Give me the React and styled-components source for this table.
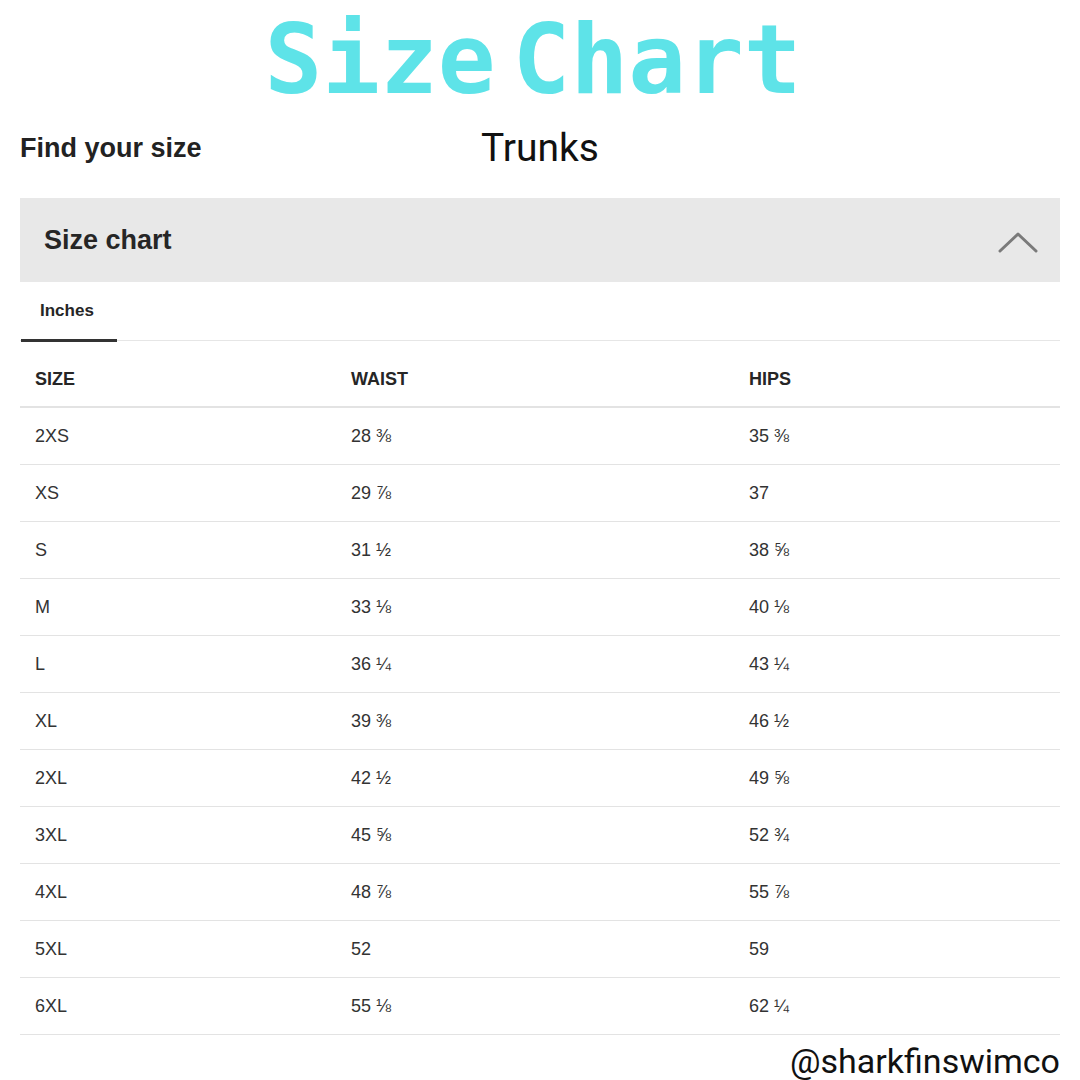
import React from "react";
import styled, { createGlobalStyle } from "styled-components";

const rows = [
	["2XS", "28 ⅜", "35 ⅜"],
	["XS", "29 ⅞", "37"],
	["S", "31 ½", "38 ⅝"],
	["M", "33 ⅛", "40 ⅛"],
	["L", "36 ¼", "43 ¼"],
	["XL", "39 ⅜", "46 ½"],
	["2XL", "42 ½", "49 ⅝"],
	["3XL", "45 ⅝", "52 ¾"],
	["4XL", "48 ⅞", "55 ⅞"],
	["5XL", "52", "59"],
	["6XL", "55 ⅛", "62 ¼"],
];

export default function App() {
	return (
		<Page>
			<Global />
			<Title>
				<span>Size</span>
				<span>Chart</span>
			</Title>
			<Intro>
				<FindText>Find your size</FindText>
				<Trunks>Trunks</Trunks>
			</Intro>
			<Accordion>
				<AccordionTitle>Size chart</AccordionTitle>
				<svg width="40" height="24" viewBox="0 0 40 24">
					<path
						d="M2 21 L20 4 L38 21"
						fill="none"
						stroke="#7a7a7a"
						strokeWidth="3"
						strokeLinecap="round"
						strokeLinejoin="round"
					/>
				</svg>
			</Accordion>
			<Tabs>
				<Tab active>Inches</Tab>
			</Tabs>
			<Table>
				<HeadRow>
					<HeadCell>SIZE</HeadCell>
					<HeadCell>WAIST</HeadCell>
					<HeadCell>HIPS</HeadCell>
				</HeadRow>
				{rows.map((r) => (
					<Row key={r[0]}>
						{r.map((v, i) => (
							<Cell key={i}>{v}</Cell>
						))}
					</Row>
				))}
			</Table>
			<Handle>@sharkfinswimco</Handle>
		</Page>
	);
}

const Global = createGlobalStyle`
	body {
		margin: 0;
		background: #fff;
	}
`;

const Page = styled.div`
	width: 1080px;
	height: 1080px;
	box-sizing: border-box;
	padding: 0 20px;
	font-family: "Liberation Sans", Arial, sans-serif;
	color: #262626;
	overflow: hidden;
`;

const Title = styled.h1`
	margin: 0;
	height: 120px;
	padding: 12px 14px 0 0;
	box-sizing: border-box;
	display: flex;
	justify-content: center;
	gap: 17px;
	font-family: "DejaVu Sans Mono", "Liberation Mono", monospace;
	font-weight: 700;
	font-size: 96px;
	line-height: 97px;
	color: #5ee3e8;
`;

const Intro = styled.div`
	height: 56px;
	display: grid;
	grid-template-columns: 1fr auto 1fr;
	align-items: center;
`;

const FindText = styled.div`
	font-size: 27px;
	font-weight: 700;
	color: #222;
`;

const Trunks = styled.div`
	font-family: "Roboto", sans-serif;
	font-size: 39px;
	color: #111;
`;

const Accordion = styled.div`
	margin-top: 22px;
	height: 84px;
	background: #e8e8e8;
	display: flex;
	align-items: center;
	justify-content: space-between;
	padding: 0 22px 0 24px;
	svg {
		margin-top: 4px;
	}
`;

const AccordionTitle = styled.div`
	font-size: 27px;
	font-weight: 700;
	color: #262626;
`;

const Tabs = styled.div`
	height: 59px;
	display: flex;
	border-bottom: 1px solid #e6e6e6;
	box-sizing: border-box;
`;

const Tab = styled.div`
	display: flex;
	align-items: center;
	padding: 0 23px 0 19px;
	margin-left: 1px;
	font-size: 17px;
	font-weight: 700;
	color: #262626;
	border-bottom: 3px solid ${({ active }) => (active ? "#333" : "transparent")};
	margin-bottom: -2px;
`;

const Table = styled.div`
	display: flex;
	flex-direction: column;
`;

const RowBase = styled.div`
	display: grid;
	grid-template-columns: 316px 398px 1fr;
	align-items: center;
	box-sizing: border-box;
`;

const HeadRow = styled(RowBase)`
	height: 67px;
	padding-top: 11px;
	border-bottom: 2px solid #e3e3e3;
`;

const Row = styled(RowBase)`
	height: 57px;
	border-bottom: 1px solid #e3e3e3;
`;

const HeadCell = styled.div`
	padding-left: 15px;
	font-size: 18px;
	font-weight: 700;
	color: #262626;
`;

const Cell = styled.div`
	padding-left: 15px;
	font-size: 18px;
	color: #333;
`;

const Handle = styled.div`
	text-align: right;
	margin-top: 6px;
	font-family: "Roboto", sans-serif;
	font-size: 34px;
	line-height: 40px;
	color: #111;
`;
